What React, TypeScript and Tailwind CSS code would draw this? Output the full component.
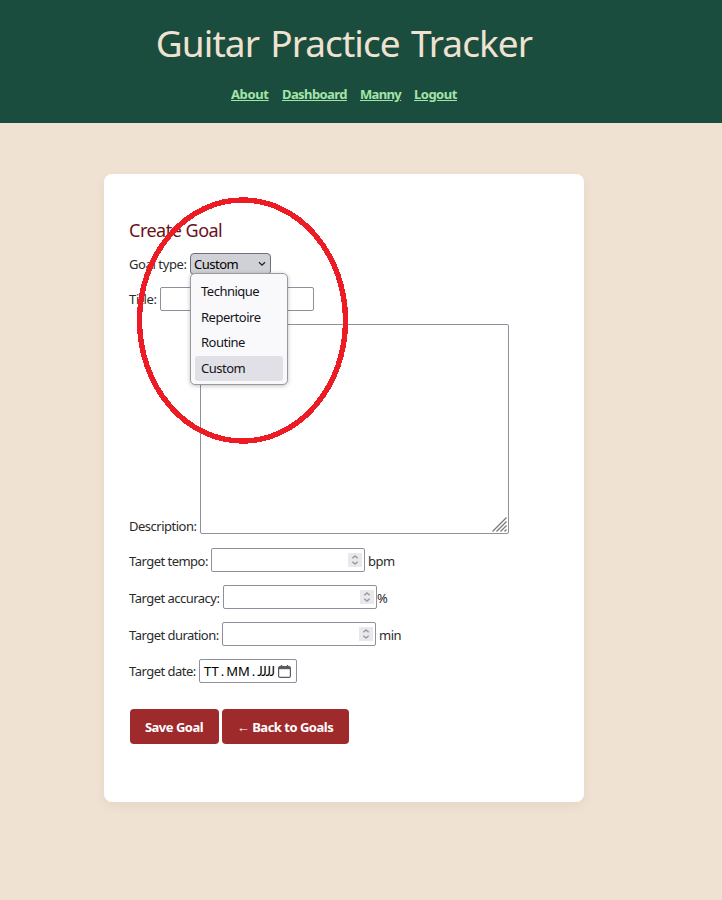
import type { ReactNode } from "react";

const goalTypes = ["Technique", "Repertoire", "Routine", "Custom"];

function Label({ className, children }: { className: string; children: ReactNode }) {
  return <span className={`shrink-0 whitespace-nowrap leading-[20px] ${className}`}>{children}</span>;
}

function NumberBox() {
  return (
    <div className="flex h-[24px] w-[154px] shrink-0 items-center justify-end rounded-[2px] border border-[#8f8f9d] bg-white pr-[2px]">
      <div className="flex h-[14px] w-[14px] items-center justify-center bg-[#e9e9ed]">
        <svg width="14" height="14" viewBox="0 0 14 14" fill="none" stroke="#9a9aa0" strokeWidth="1.5">
          <path d="M4.3 5.2 7 2.9l2.7 2.3M4.3 8.8 7 11.1l2.7-2.3" />
        </svg>
      </div>
    </div>
  );
}

function GoalTypeSelect() {
  return (
    <div className="relative h-[22px] w-[81px] shrink-0">
      <div className="flex h-[22px] items-center justify-between rounded-[4px] border border-[#6f6f7b] bg-[#d0d0d7] pl-[3px] pr-[4px] text-black">
        <span className="text-[13px] leading-[20px] tracking-[-0.5px]">Custom</span>
        <svg width="8" height="6" viewBox="0 0 8 6" fill="none" stroke="#222" strokeWidth="1.3">
          <path d="M1 1.2 4 4.2l3-3" />
        </svg>
      </div>
      <div className="absolute left-0 top-[20px] z-10 h-[112px] w-[98px] rounded-[5px] border border-[#98989f] bg-[#f9f9fb] px-[4px] pt-[5px] shadow-[0_1px_4px_rgba(0,0,0,0.25)]">
        {goalTypes.map((type) => (
          <div
            key={type}
            className={`flex h-[25.5px] items-center rounded-[3px] pl-[6px] text-[13px] tracking-[-0.5px] text-[#15141a] ${
              type === "Custom" ? "bg-[#e0e0e6]" : ""
            }`}
          >
            {type}
          </div>
        ))}
      </div>
    </div>
  );
}

export default function App() {
  return (
    <div className="h-[900px] w-[722px] overflow-hidden bg-[#f0e2d2] font-['Noto_Sans','Open_Sans',sans-serif] text-[13px] text-[#2b2b2b]">
      <header className="flex h-[123px] flex-col items-center bg-[#1b4d3e] pr-[34px]">
        <h1 className="mt-[17px] h-[52px] whitespace-nowrap text-[37px] leading-[52px] tracking-[-0.92px] text-[#f0e2d2] [word-spacing:2.4px]">
          Guitar Practice Tracker
        </h1>
        <nav className="mt-[15px] flex gap-[13px] whitespace-nowrap text-[13px] font-bold leading-[20px] tracking-[-0.5px] text-[#a3e4a8] underline">
          <a className="w-[38px] tracking-[-0.4px]">About</a>
          <a className="w-[65px] tracking-[-0.6px]">Dashboard</a>
          <a className="w-[41px] tracking-[-0.65px]">Manny</a>
          <a className="w-[43px]">Logout</a>
        </nav>
      </header>

      <main className="relative ml-[104px] mt-[51px] h-[628px] w-[480px] rounded-[8px] bg-white pl-[26px] pt-[43px] shadow-[0_4px_12px_rgba(0,0,0,0.05)]">
        <h2 className="-ml-px h-[26px] text-[18px] leading-[26px] tracking-[-0.5px] text-[#6b0f1a]">Create Goal</h2>
        <div className="-ml-px mt-[9px] flex h-[24px] items-center">
          <Label className="w-[61px] tracking-[-0.4px]">Goal type:</Label>
          <GoalTypeSelect />
        </div>
        <div className="-ml-px mt-[11px] flex h-[24px] items-center">
          <Label className="w-[31px] tracking-[-0.3px]">Title:</Label>
          <div className="h-[24px] w-[154px] rounded-[2px] border border-[#8f8f9d] bg-white" />
        </div>
        <div className="-ml-px mt-[13px] flex h-[210px] items-end">
          <Label className="-mb-[2px] w-[71px] tracking-[-0.5px]">Description:</Label>
          <div className="flex h-[210px] w-[309px] items-end justify-end rounded-[2px] border border-[#8f8f9d] bg-white p-px">
            <svg width="15" height="15" viewBox="0 0 15 15" stroke="#777" strokeWidth="1.3">
              <path d="M.5 14.5l14-14M4.5 14.5l10-10M8.5 14.5l6-6M12.5 14.5l2-2" />
            </svg>
          </div>
        </div>
        <div className="-ml-px mt-[14px] flex h-[24px] items-center">
          <Label className="w-[82px] pt-[2px] tracking-[-0.52px]">Target tempo:</Label>
          <NumberBox />
          <Label className="ml-[3px] pt-[2px] tracking-[-0.5px]">bpm</Label>
        </div>
        <div className="-ml-px mt-[13px] flex h-[24px] items-center">
          <Label className="w-[94px] pt-[2px] tracking-[-0.52px]">Target accuracy:</Label>
          <NumberBox />
          <Label className="pt-[2px] tracking-[-0.3px]">%</Label>
        </div>
        <div className="-ml-px mt-[13px] flex h-[24px] items-center">
          <Label className="w-[93px] pt-[2px] tracking-[-0.52px]">Target duration:</Label>
          <NumberBox />
          <Label className="ml-[3px] pt-[2px] tracking-[-0.5px]">min</Label>
        </div>
        <div className="-ml-px mt-[13px] flex h-[24px] items-center">
          <Label className="w-[70px] tracking-[-0.52px]">Target date:</Label>
          <div className="flex h-[24px] w-[98px] items-center justify-between rounded-[2px] border border-[#8f8f9d] bg-white pl-[4px] pr-[5px] text-black">
            <span className="flex items-baseline gap-[2px] whitespace-nowrap leading-[20px]">
              <span>TT</span>
              <span>.</span>
              <span>MM</span>
              <span>.</span>
              <span className="w-[18px] font-[Lato] tracking-[-1.2px]">JJJJ</span>
            </span>
            <svg width="13" height="13" viewBox="0 0 13 13" fill="none" stroke="#5b5b60">
              <rect x=".6" y="1.6" width="11.8" height="10.8" rx="1.5" strokeWidth="1.2" />
              <path d="M1 3h11" strokeWidth="2.4" />
              <path d="M3.5 0v3M9.5 0v3" strokeWidth="1.4" />
            </svg>
          </div>
        </div>
        <div className="mt-[26px] flex h-[35px] gap-[3px] whitespace-nowrap text-[13px] font-bold tracking-[-0.5px] text-white">
          <button className="h-[35px] w-[89px] rounded-[4px] bg-[#9e2a2b] pr-[1px] pt-[2px]">Save Goal</button>
          <button className="h-[35px] w-[127px] rounded-[4px] bg-[#9e2a2b] pr-[1px] pt-[2px]">← Back to Goals</button>
        </div>
        <svg
          className="absolute left-[32px] top-[22px] z-20"
          width="213"
          height="248"
          viewBox="0 0 213 248"
          fill="none"
          shapeRendering="crispEdges"
        >
          <ellipse cx="106.5" cy="124.5" rx="103" ry="120.5" stroke="#ed1c24" strokeWidth="5.4" />
        </svg>
      </main>
    </div>
  );
}
